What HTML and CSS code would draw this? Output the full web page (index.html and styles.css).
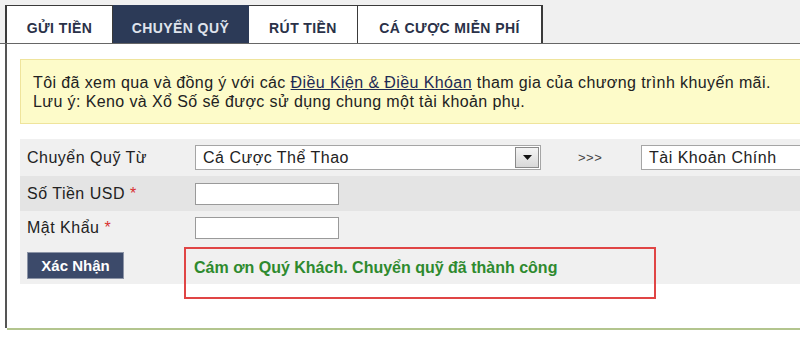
FILE: index.html
```html
<!DOCTYPE html>
<html lang="vi">
<head>
<meta charset="utf-8">
<link rel="stylesheet" href="styles.css">
</head>
<body>
<div class="tabs">
  <div class="tab t1">GỬI TIỀN</div>
  <div class="tab t2 active">CHUYỂN QUỸ</div>
  <div class="tab t3">RÚT TIỀN</div>
  <div class="tab t4">CÁ CƯỢC MIỄN PHÍ</div>
</div>
<div class="content">
  <div class="notice">
    Tôi đã xem qua và đồng ý với các <a class="link" href="#">Điều Kiện &amp; Điều Khóan</a> tham gia của chương trình khuyến mãi.<br>
    Lưu ý: Keno và Xổ Số sẽ được sử dụng chung một tài khoản phụ.
  </div>
  <div class="form">
    <div class="row r1">
      <div class="label">Chuyển Quỹ Từ</div>
      <div class="select from">
        <span class="sel-text">Cá Cược Thể Thao</span>
        <span class="arrow"><svg width="9" height="5" viewBox="0 0 9 5"><path d="M0 0H9L4.5 5Z" fill="#111"/></svg></span>
      </div>
      <div class="arrows">&gt;&gt;&gt;</div>
      <div class="select to"><span class="sel-text">Tài Khoản Chính</span></div>
    </div>
    <div class="row r2">
      <div class="label">Số Tiền USD <span class="req">*</span></div>
      <div class="input"></div>
    </div>
    <div class="row r3">
      <div class="label">Mật Khẩu <span class="req">*</span></div>
      <div class="input"></div>
    </div>
    <div class="row r4">
      <div class="btn">Xác Nhận</div>
      <div class="msg">Cám ơn Quý Khách. Chuyển quỹ đã thành công</div>
    </div>
  </div>
</div>
<div class="footer-line"></div>
</body>
</html>
```

FILE: styles.css
```css
html, body {
  margin: 0;
  padding: 0;
  background: #ffffff;
  font-family: "Liberation Sans", Arial, sans-serif;
  color: #222;
  overflow: hidden;
}
.tabs {
  display: flex;
  background: #f0f0f0;
  padding: 5px 0 0 5px;
  border-bottom: 1px solid #666;
  height: 38px;
}
.tab {
  display: flex;
  align-items: center;
  justify-content: center;
  padding-top: 6px;
  background: #fff;
  border: 1px solid #3a3a3a;
  border-bottom: none;
  border-left: none;
  font-size: 14px;
  letter-spacing: 0.4px;
  font-weight: bold;
  color: #2a3148;
  box-sizing: border-box;
  height: 38px;
}
.t1 { width: 108px; border-left: 2px solid #3a3a3a; }
.t2 { width: 136px; }
.t3 { width: 109px; }
.t4 { width: 185px; border-right: 2px solid #3a3a3a; }
.tab.active {
  background: #2c3a57;
  color: #dfe3ec;
  border-color: #2c3a57;
}
.content {
  margin-left: 5px;
  border-left: 2px solid #555;
  padding: 15px 0 0 13px;
  height: 284px;
  box-sizing: border-box;
}
.notice {
  background: #fdfbc9;
  border: 1px solid #efe49c;
  border-right: none;
  height: 65px;
  box-sizing: border-box;
  padding: 13px 12px 0 12px;
  font-size: 16px;
  letter-spacing: 0.4px;
  line-height: 19px;
  color: #222;
}
.link {
  color: #1d2a55;
  text-decoration: underline;
}
.form {
  margin-top: 15px;
}
.row {
  display: flex;
  align-items: center;
  box-sizing: border-box;
  font-size: 16px;
  letter-spacing: 0.5px;
}
.r1 { height: 37px; background: #f0f0f0; }
.r2 { height: 35px; background: #e4e4e4; }
.r3 { height: 34px; background: #f0f0f0; }
.r4 { height: 39px; background: #f0f0f0; align-items: flex-start; }
.label {
  width: 175px;
  padding-left: 7px;
  box-sizing: border-box;
  color: #222;
}
.req { color: #d83030; }
.select {
  display: flex;
  align-items: center;
  background: #fff;
  border: 1px solid #a5a5a5;
  height: 25px;
  box-sizing: border-box;
}
.sel-text { padding-left: 7px; color: #222; }
.select.from { width: 346px; justify-content: space-between; }
.arrow {
  display: flex;
  align-items: center;
  justify-content: center;
  width: 24px;
  height: 21px;
  margin-right: 1px;
  background: linear-gradient(#f4f4f4, #d8d8d8);
  border: 1px solid #8a8a8a;
  box-sizing: border-box;
}
.arrows {
  width: 100px;
  padding-left: 37px;
  box-sizing: border-box;
  font-size: 13px;
  letter-spacing: 0.5px;
  color: #444;
}
.select.to { flex: 1; border-right: none; }
.input {
  width: 144px;
  height: 22px;
  background: #fff;
  border: 1px solid #9a9a9a;
  box-sizing: border-box;
}
.btn {
  margin: 7px 0 0 7px;
  width: 97px;
  height: 27px;
  background: #3c4a6a;
  border: 1px solid #8c94a6;
  box-sizing: border-box;
  color: #fff;
  font-weight: bold;
  font-size: 15px;
  letter-spacing: 0;
  display: flex;
  align-items: center;
  justify-content: center;
}
.msg {
  margin: 2px 0 0 60px;
  width: 472px;
  height: 52px;
  flex: none;
  border: 2px solid #e04545;
  box-sizing: border-box;
  padding: 10px 0 0 8px;
  font-size: 16px;
  letter-spacing: 0;
  font-weight: bold;
  color: #2e8a2e;
}
.footer-line {
  margin-left: 7px;
  height: 2px;
  background: #b3c58e;
}
```
